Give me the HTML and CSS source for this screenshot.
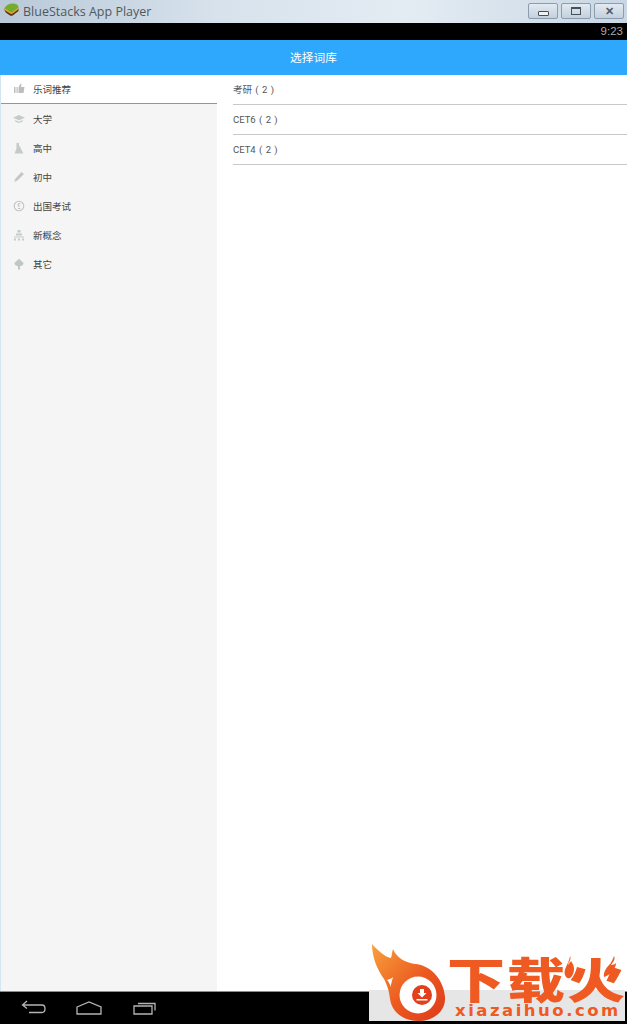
FILE: index.html

```html
<!DOCTYPE html>
<html lang="zh-CN">
<head>
    <meta charset="UTF-8">
    <meta name="viewport" content="width=device-width, initial-scale=1.0">
    <title>BlueStacks App Player</title>
    <link rel="stylesheet" href="styles.css">
</head>
<body>
<div class="window">
    <!-- Window title bar -->
    <div class="titlebar">
        <svg class="app-logo" width="15" height="13" viewBox="0 0 15 13">
            <path d="M0.500 6.500 C0.500 9 3 10.500 6 12.500 C7 13 8 13 9 12.300 L14.500 8 V5.500 H0.500z" fill="#5a3312"/>
            <path d="M0.500 5 V7 L6.500 10.800 C7.200 11.200 8 11.200 8.800 10.600 L14.500 6.300 V4z" fill="#e3a52a"/>
            <path d="M0.500 5 C2 2.500 5 0.500 8.500 0.500 C12 0.500 14.500 2 14.500 4.300 L8.500 9 C7.800 9.500 7 9.500 6.300 9z" fill="#73ad30"/>
        </svg>
        <span class="app-name">BlueStacks App Player</span>
        <div class="win-buttons">
            <div class="win-btn"><span class="icon-min"></span></div>
            <div class="win-btn"><span class="icon-max"></span></div>
            <div class="win-btn"><span class="icon-close">✕</span></div>
        </div>
    </div>

    <div class="statusbar">9:23</div>
    <div class="appbar">选择词库</div>

    <div class="main">
        <!-- Category list -->
        <ul class="sidebar">
            <li class="cat active">
                <svg class="cat-icon" viewBox="0 0 12 12"><path d="M1 4h1.500v6H1zM3.500 4h1.200v6H3.500zM5.500 4.500 7.500 0.500 8.500 1 8 4h3.500l-1 6H5.500z" fill="#bdbdbd"/></svg>
                <span>乐词推荐</span>
            </li>
            <li class="cat">
                <svg class="cat-icon" viewBox="0 0 12 12"><path d="M0 4.800 6 2l6 2.800L6 7.300zM2.200 7 6 8.700 9.800 7v1.300C8.500 9.300 7.300 9.800 6 9.800S3.500 9.300 2.200 8.300z" fill="#c4cbca"/></svg>
                <span>大学</span>
            </li>
            <li class="cat">
                <svg class="cat-icon" viewBox="0 0 12 12"><path d="M3.500 1h2.500v4.500L6.500 4l1 .5V6l3 5.500H1.500l2-5z" fill="#c6caca"/></svg>
                <span>高中</span>
            </li>
            <li class="cat">
                <svg class="cat-icon" viewBox="0 0 12 12"><path d="M8.500 1 11 3 4.500 9.500 1 11l1.500-3.500z" fill="#c6c6c6"/></svg>
                <span>初中</span>
            </li>
            <li class="cat">
                <svg class="cat-icon" viewBox="0 0 12 12"><circle cx="6" cy="6" r="4.800" fill="none" stroke="#bfc4c4" stroke-width="1.100"/><path d="M7.500 3.500H5.500L5 6h2M5 8.500h2.500" fill="none" stroke="#bfc4c4"/></svg>
                <span>出国考试</span>
            </li>
            <li class="cat">
                <svg class="cat-icon" viewBox="0 0 12 12"><path d="M4.500 1h3v2.500h-3zM3 4.500h6v2H3zM1 7.500h10v1H1zM1 9.500h2v2H1zM5 9.500h2v2H5zM9 9.500h2v2H9z" fill="#c4cbca"/></svg>
                <span>新概念</span>
            </li>
            <li class="cat">
                <svg class="cat-icon" viewBox="0 0 12 12"><path d="M6 .8 10.500 5C10.500 7.500 8 8 7 8.200V11.500H5V8.200C4 8 1.500 7.500 1.500 5z" fill="#c0c6c4"/></svg>
                <span>其它</span>
            </li>
        </ul>

        <!-- Word books -->
        <ul class="books">
            <li class="book">考研 ( 2 )</li>
            <li class="book">CET6 ( 2 )</li>
            <li class="book">CET4 ( 2 )</li>
        </ul>
    </div>

    <!-- Android nav bar -->
    <div class="navbar">
        <svg class="nav-icon" width="26" height="16" viewBox="0 0 26 16" fill="none" stroke="#b4b4b4" stroke-width="1.300">
            <path d="M6 1 1.500 5 6 8.500M2 5h19c4 0 4 7.500 0 7.500H8"/>
        </svg>
        <svg class="nav-icon" width="26" height="14" viewBox="0 0 26 14" fill="none" stroke="#b4b4b4" stroke-width="1.300">
            <path d="M1 6 13 1l12 5v7H1z"/>
        </svg>
        <svg class="nav-icon nav-recent" width="24" height="14" viewBox="0 0 24 14" fill="none" stroke="#b4b4b4" stroke-width="1.300">
            <path d="M1 5h18v8H1zM5 2.500h17v7"/>
        </svg>
    </div>

    <!-- Site watermark, sits over the page -->
    <div class="watermark">
        <svg class="wm-flame" width="80" height="84" viewBox="0 0 80 84">
            <defs>
                <linearGradient id="flameFill" x1="0" y1="0" x2="1" y2="1">
                    <stop offset="0" stop-color="#f8a23c"/>
                    <stop offset="0.550" stop-color="#ec5a20"/>
                    <stop offset="1" stop-color="#dd3a1a"/>
                </linearGradient>
            </defs>
            <path d="M0 7C8 16 14 20 19 21 20 18 20 15 21 12 24 20 33 26 44 27 60 29 72 44 73 60 74 74 62 84 47 84 32 84 20 76 18 62 17 54 16 50 12 42 5 32 0 20 0 7z" fill="url(#flameFill)"/>
            <path d="M15 43C17 42 19 42 21 40 20 44 19 47 18.500 50 18 47 17 45 15 43z" fill="#fff"/>
            <circle cx="46" cy="58" r="18.500" fill="#fff"/>
            <circle cx="50" cy="58" r="10" fill="#e2401c"/>
            <path d="M48 52h4v4h2.500L50 60.500 45.500 56H48zM44.500 62h11v1.500h-11z" fill="#fff"/>
        </svg>
        <div class="wm-text">
            <div class="wm-cn">下载火</div>
            <div class="wm-en">xiazaihuo.com</div>
        </div>
        <!-- little flames beside the last character -->
        <svg class="wm-sparks" width="56" height="26" viewBox="0 0 56 26">
            <path d="M6 0C8 4 4 6 4 9 5 8 6 6 7 5 10 9 11 13 9 18 7 23 3 24 1 19-1 13 5 8 6 0z" fill="#ee5a21"/>
            <path d="M50 0C52 4 48 7 47 9 49 9 51 8 52 7 52 12 47 19 40 21 39 16 43 11 46 8 48 5 49 3 50 0z" fill="#ee5a21"/>
        </svg>
    </div>
</div>
</body>
</html>
```

FILE: styles.css

```css
html, body {
    margin: 0;
    padding: 0;
}

body {
    font-family: "Liberation Sans", "Noto Sans CJK SC", sans-serif;
    background-color: #fff;
}

ul {
    list-style: none;
    margin: 0;
    padding: 0;
}

.window {
    position: relative;
    display: flex;
    flex-direction: column;
    width: 627px;
    height: 1024px;
    overflow: hidden;
}

/* Title bar */
.titlebar {
    display: flex;
    align-items: center;
    flex: 0 0 23px;
    padding-left: 4px;
    background: linear-gradient(to right, #b9c9d8, #d7e2ec 35%, #e4ecf3 65%, #c9d7e4);
}

.app-logo {
    margin-right: 4px;
    margin-top: -4px;
}

.app-name {
    font-family: "Open Sans", "Liberation Sans", sans-serif;
    font-size: 12.5px;
    color: #50585f;
}

.win-buttons {
    display: flex;
    gap: 3px;
    margin-left: auto;
    margin-right: 3px;
    margin-top: -1px;
}

.win-btn {
    display: flex;
    align-items: center;
    justify-content: center;
    width: 28px;
    height: 14px;
    border: 1px solid #8a9cae;
    border-radius: 2px;
    background: linear-gradient(to bottom, #e2eaf2, #c3d0dc);
}

.icon-min {
    width: 9px;
    height: 3px;
    margin-top: 4px;
    border: 1px solid #46505a;
    background-color: #f2f2f2;
    border-radius: 1px;
}

.icon-max {
    width: 8px;
    height: 5px;
    border: 1px solid #46505a;
    border-top-width: 2px;
}

.icon-close {
    font-size: 11px;
    line-height: 11px;
    font-weight: bold;
    color: #525c66;
}

/* Android bars */
.statusbar {
    flex: 0 0 17px;
    padding-right: 4px;
    background-color: #000;
    color: #a8a8a8;
    font-size: 11.5px;
    line-height: 17px;
    text-align: right;
}

.appbar {
    flex: 0 0 35px;
    background-color: #2ea8fd;
    color: #fff;
    font-size: 11.7px;
    line-height: 35px;
    text-align: center;
}

.main {
    display: flex;
    flex: 1;
}

/* Left list */
.sidebar {
    width: 216px;
    border-left: 1px solid #d5e6f3;
    background-color: #f5f5f5;
}

.cat {
    display: flex;
    align-items: center;
    height: 29px;
    padding-left: 12px;
    font-size: 9.5px;
    color: #444;
}

.cat.active {
    box-sizing: border-box;
    background-color: #fff;
    border-bottom: 1px solid #45aee6;
}

.cat-icon {
    width: 12px;
    height: 12px;
    margin-right: 8px;
}

/* Right list */
.books {
    flex: 1;
    padding-left: 16px;
}

.book {
    height: 29px;
    border-bottom: 1px solid #c8c8c8;
    font-family: Roboto, "Noto Sans CJK SC", sans-serif;
    font-size: 9.5px;
    line-height: 29px;
    word-spacing: 1px;
    color: #555;
}

.navbar {
    display: flex;
    align-items: center;
    gap: 29px;
    flex: 0 0 32px;
    padding-left: 21px;
    border-top: 1px solid #8c8c8c;
    background-color: #000;
}

.nav-recent {
    margin-left: 2px;
}

/* Watermark */
.watermark {
    position: absolute;
    right: 2px;
    bottom: 3px;
    display: flex;
    width: 256px;
    height: 84px;
}

.watermark::before {
    content: "";
    position: absolute;
    left: 0;
    right: 0;
    bottom: 0;
    height: 31px;
    background-color: #e6e6e6;
}

.wm-flame {
    position: relative;
    flex: none;
    margin-left: 3px;
}

.wm-text {
    position: relative;
    margin-left: -5px;
}

.wm-cn {
    margin-top: 17px;
    font-family: "Noto Sans CJK SC", sans-serif;
    font-size: 58px;
    font-weight: 900;
    line-height: 46px;
    letter-spacing: 2px;
    white-space: nowrap;
    color: #ee5a21;
    transform: scaleY(0.82);
    transform-origin: center;
}

.wm-en {
    margin-top: 2px;
    padding-left: 8px;
    font-family: "DejaVu Sans", sans-serif;
    font-size: 16.5px;
    font-weight: bold;
    line-height: 18px;
    letter-spacing: 2.5px;
    white-space: nowrap;
    color: #ee5a21;
}

.wm-sparks {
    position: absolute;
    right: 5px;
    top: 19px;
}
```
